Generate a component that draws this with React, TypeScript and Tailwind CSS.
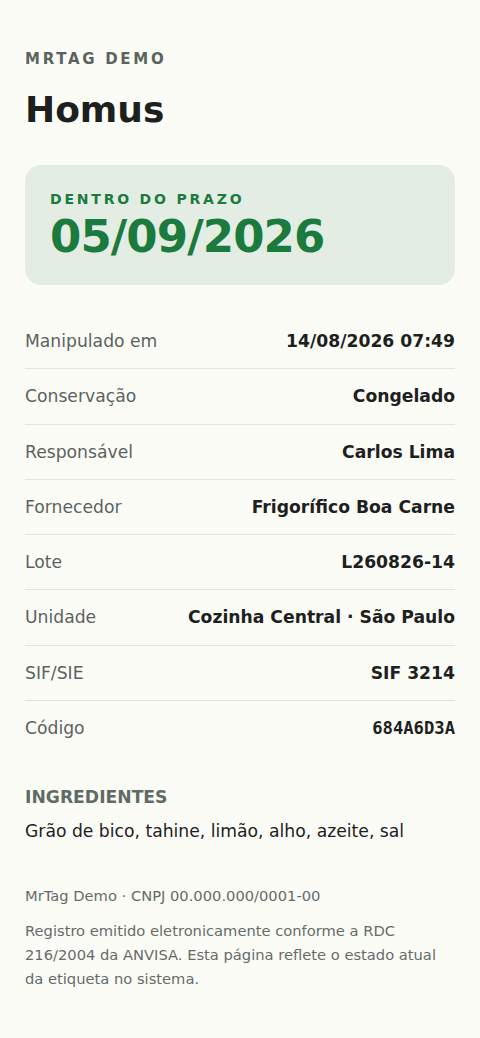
const rows: { label: string; value: string; mono?: boolean }[] = [
  { label: "Manipulado em", value: "14/08/2026 07:49" },
  { label: "Conservação", value: "Congelado" },
  { label: "Responsável", value: "Carlos Lima" },
  { label: "Fornecedor", value: "Frigorífico Boa Carne" },
  { label: "Lote", value: "L260826-14" },
  { label: "Unidade", value: "Cozinha Central · São Paulo" },
  { label: "SIF/SIE", value: "SIF 3214" },
  { label: "Código", value: "684A6D3A", mono: true },
];

export default function App() {
  return (
    <div className="min-h-screen bg-[#fcfcf7] font-['DejaVu_Sans',sans-serif] text-[#1c211e]">
      <div className="px-[25px] pt-[49px] pb-[40px]">
        <p className="text-[15px] font-bold leading-[20px] tracking-[0.18em] text-[#5a645e]">
          MRTAG DEMO
        </p>
        <h1 className="mt-[19px] text-[36px] font-bold leading-[44px]">Homus</h1>

        <div className="mt-[33px] rounded-[16px] bg-[#e3ede4] px-[25px] pt-[24px] pb-[22px]">
          <p className="text-[14px] font-bold leading-[20px] tracking-[0.2em] text-[#1b7a3d]">
            DENTRO DO PRAZO
          </p>
          <p className="mt-[2px] text-[45px] font-bold leading-[52px] tracking-[-0.02em] text-[#1b7a3d]">
            05/09/2026
          </p>
        </div>

        <div className="mt-[29px]">
          {rows.map((r, i) => (
            <div
              key={r.label}
              className={`flex items-center justify-between py-[14px] ${
                i < rows.length - 1 ? "border-b border-[#e6e3d8]" : ""
              }`}
            >
              <span className="text-[17.2px] leading-[26.3px] text-[#5b625e]">{r.label}</span>
              <span
                className={
                  r.mono
                    ? "font-['DejaVu_Sans_Mono',monospace] text-[17.2px] font-bold leading-[26.3px]"
                    : "text-[17.2px] font-bold leading-[26.3px]"
                }
              >
                {r.value}
              </span>
            </div>
          ))}
        </div>

        <div className="mt-[29px]">
          <p className="text-[17.2px] font-bold leading-[26px] text-[#5f6c64]">INGREDIENTES</p>
          <p className="mt-[8px] text-[17.2px] leading-[26px]">
            Grão de bico, tahine, limão, alho, azeite, sal
          </p>
        </div>

        <div className="mt-[41px] text-[#666b68]">
          <p className="text-[14.7px] leading-[22px]">MrTag Demo · CNPJ 00.000.000/0001-00</p>
          <p className="mt-[12px] text-[14.7px] leading-[24px]">
            Registro emitido eletronicamente conforme a RDC 216/2004 da ANVISA. Esta página
            reflete o estado atual da etiqueta no sistema.
          </p>
        </div>
      </div>
    </div>
  );
}
